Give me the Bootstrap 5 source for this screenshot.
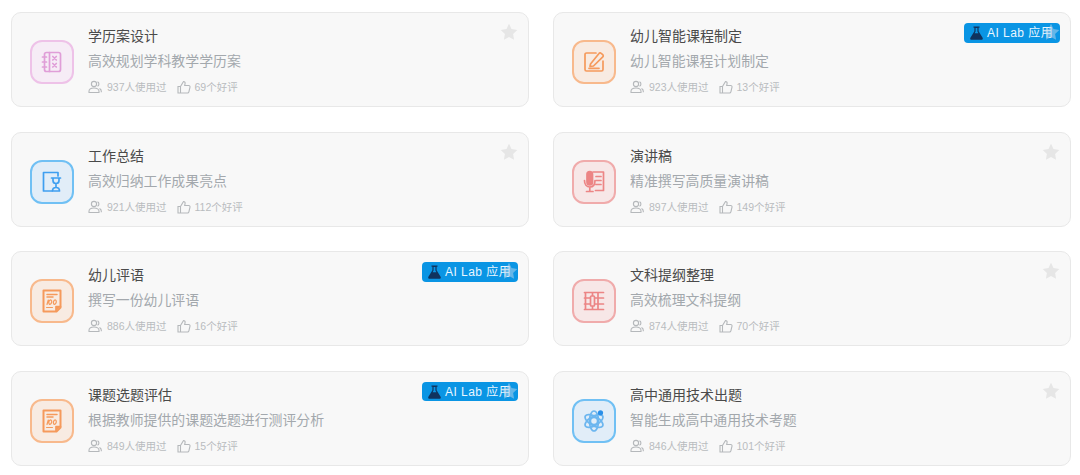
<!DOCTYPE html>
<html lang="zh">
<head>
<meta charset="utf-8">
<title>AI 应用</title>
<link href="https://cdn.jsdelivr.net/npm/bootstrap@5.3.0/dist/css/bootstrap.min.css" rel="stylesheet">
<style>
html,body{height:100%;overflow:hidden;background:#fff}
body{font-family:"Liberation Sans","Noto Sans CJK SC",sans-serif}
.app-grid{display:grid;grid-template-columns:518px 518px;column-gap:24px;row-gap:24.6px;padding:12px 9px 0 11px}
.app-card{height:95px;background:#f8f8f8;border:1px solid #e8e8e8;border-radius:10px;padding:0 18px;position:relative}
.app-ico{width:44px;height:44px;border-radius:12px;border:2px solid;flex:none;margin:5px 14px 0 0}
.app-ico svg{width:24px;height:24px;fill:none;stroke:currentColor;stroke-width:1.700;stroke-linecap:round;stroke-linejoin:round}
.tone-pink{color:#e09ed8;background:#f6ecf6;border-color:#eec2e8}
.tone-orange{color:#f59a5c;background:#f8ebe2;border-color:#f8b98c}
.tone-blue{color:#3f9ff0;background:#e1edf8;border-color:#70c0f4}
.tone-red{color:#ec8585;background:#f7e7e7;border-color:#f0abab}
.tone-blue .atom-ico{color:#6cb6ef}
.app-text{align-self:flex-start}
.app-title{font-size:14px;line-height:20px;color:#4a4a4a;margin-top:13px}
.app-desc{font-size:13.9px;line-height:20px;color:#a3a8ad;margin-top:5px}
.app-meta{font-size:10.5px;line-height:16px;color:#b9bcbf;margin-top:8px}
.app-meta svg{width:14px;height:14px;fill:none;stroke:#b5b8bb;stroke-width:1.1;margin-right:5px;flex:none}
.app-meta .meta-gap{margin-left:10px;margin-right:4px}
.app-star{position:absolute;top:10px;right:10px;width:18px;height:18px;fill:#e6e6e6}
.lab-tag{position:absolute;top:10px;right:10.500px;width:95.500px;height:19.500px;background:#0a95e4;border-radius:4px;color:#e9f6ff;font-size:12px;letter-spacing:.45px;padding-left:6px;gap:4px;white-space:nowrap}
.lab-tag span{padding-top:1px}
.lab-tag svg{width:13px;height:14px;flex:none}
.star-over{z-index:2;fill:rgba(190,215,235,.5)}
</style>
</head>
<body>
<svg width="0" height="0" class="position-absolute">
<defs>
<symbol id="s-user" viewBox="0 0 14 14"><circle cx="6" cy="4" r="2.600"/><path d="M1 12.500v-1.200c0-2 2-3.300 5-3.300s5 1.300 5 3.300v1.200z"/><path d="M9.500 1.800a2.500 2.500 0 0 1 0 4.500M11.500 8.500c1 .5 1.800 1.400 1.800 2.800v1"/></symbol>
<symbol id="s-up" viewBox="0 0 14 14"><path d="M1 6.500h2.500v6.500H1zM3.500 6.500 6.500 1.500c1.200 0 1.800.8 1.600 1.900L7.700 5.500h4c.9 0 1.500.8 1.300 1.600l-1.100 4.700c-.2.700-.7 1.200-1.400 1.200H3.500"/></symbol>
<symbol id="s-star" viewBox="0 0 18 18"><path d="M9 .8l2.500 5.300 5.800.8-4.200 4 1 5.800L9 14.100l-5.100 2.600 1-5.800-4.200-4 5.800-.8z"/></symbol>
<symbol id="s-flask" viewBox="0 0 13 14"><path fill="#10335f" d="M3.500 .5h6v1.300H8.600v3.400l4 6.600c.5.900 0 2-1.100 2H1.500C.4 13.800-.1 12.700.4 11.800l4-6.600V1.800h-.9z"/><path fill="#0a95e4" d="M5.600 2h1.800v3.600l1 1.700H4.600l1-1.700z"/></symbol>
<symbol id="s-report" viewBox="0 0 24 24"><path d="M3.500 1.500h17v17l-4 4h-13z" stroke-width="2"/><path d="M16 22v-4.500h4.500" fill="currentColor"/><path d="M7 5.500h10M7 8h6" stroke-width="1.500"/><path d="M7 15.500l1.300-4.500M11.200 11.200a1.400 2.200 15 1 0 .1 .1M15.800 11.200a1.400 2.200 15 1 0 .1 .1" stroke-width="1.200"/><path d="M6.500 18.500h6" stroke-width="1"/></symbol>
</defs>
</svg>
<main class="app-grid">

<article class="app-card d-flex align-items-center">
<div class="app-ico tone-pink d-flex align-items-center justify-content-center"><svg viewBox="0 0 24 24"><rect x="4.500" y="2.500" width="16" height="19" rx="2"/><path d="M9.500 2.500v19M2.500 7h4M2.500 12h4M2.500 17h4M12.800 6.500l3.500 3.500M16.300 6.500 12.800 10M12.800 13.500l3.500 3.500M16.300 13.500 12.800 17"/></svg></div>
<div class="flex-grow-1 app-text"><div class="app-title">学历案设计</div><div class="app-desc">高效规划学科教学学历案</div>
<div class="app-meta d-flex align-items-center"><svg><use href="#s-user"/></svg><span>937人使用过</span><svg class="meta-gap"><use href="#s-up"/></svg><span>69个好评</span></div></div>
<svg class="app-star"><use href="#s-star"/></svg>
</article>

<article class="app-card d-flex align-items-center">
<div class="app-ico tone-orange d-flex align-items-center justify-content-center"><svg viewBox="0 0 24 24"><path d="M14 3H4.500A1.500 1.500 0 0 0 3 4.500v15A1.500 1.500 0 0 0 4.500 21h15a1.500 1.500 0 0 0 1.500-1.500V11"/><path d="M8.500 14l8.500-10.500a1.500 1.500 0 0 1 2.200-.2l1.500 1.300a1.500 1.500 0 0 1 .1 2.200L11.500 16l-3.500.5z"/><path d="M7 18.300h10"/></svg></div>
<div class="flex-grow-1 app-text"><div class="app-title">幼儿智能课程制定</div><div class="app-desc">幼儿智能课程计划制定</div>
<div class="app-meta d-flex align-items-center"><svg><use href="#s-user"/></svg><span>923人使用过</span><svg class="meta-gap"><use href="#s-up"/></svg><span>13个好评</span></div></div>
<div class="lab-tag d-flex align-items-center"><svg><use href="#s-flask"/></svg><span>AI Lab 应用</span></div>
<svg class="app-star star-over"><use href="#s-star"/></svg>
</article>

<article class="app-card d-flex align-items-center">
<div class="app-ico tone-blue d-flex align-items-center justify-content-center"><svg viewBox="0 0 24 24" stroke-width="1.800"><path d="M18 6V2.500H3.500v18.500H12"/><path d="M11.500 8h9M13 8v2.500a3 3 0 0 0 6 0V8M16 13.500v4M12.500 21c0-2 1.500-3.500 3.500-3.500s3.500 1.500 3.500 3.500z"/></svg></div>
<div class="flex-grow-1 app-text"><div class="app-title">工作总结</div><div class="app-desc">高效归纳工作成果亮点</div>
<div class="app-meta d-flex align-items-center"><svg><use href="#s-user"/></svg><span>921人使用过</span><svg class="meta-gap"><use href="#s-up"/></svg><span>112个好评</span></div></div>
<svg class="app-star"><use href="#s-star"/></svg>
</article>

<article class="app-card d-flex align-items-center">
<div class="app-ico tone-red d-flex align-items-center justify-content-center"><svg viewBox="0 0 24 24"><rect x="5" y="1.500" width="5.500" height="13.500" rx="2.750" fill="currentColor"/><path d="M2.500 10.500c0 4 2.200 6.500 5.300 6.500s5.200-2.500 5.200-6.500M7.800 17v4.500M4.500 21.500h6.500M11 2h10.500v18.500h-8M14 6.500h5M14 10.500h5M14 14.500h5"/></svg></div>
<div class="flex-grow-1 app-text"><div class="app-title">演讲稿</div><div class="app-desc">精准撰写高质量演讲稿</div>
<div class="app-meta d-flex align-items-center"><svg><use href="#s-user"/></svg><span>897人使用过</span><svg class="meta-gap"><use href="#s-up"/></svg><span>149个好评</span></div></div>
<svg class="app-star"><use href="#s-star"/></svg>
</article>

<article class="app-card d-flex align-items-center">
<div class="app-ico tone-orange d-flex align-items-center justify-content-center"><svg><use href="#s-report"/></svg></div>
<div class="flex-grow-1 app-text"><div class="app-title">幼儿评语</div><div class="app-desc">撰写一份幼儿评语</div>
<div class="app-meta d-flex align-items-center"><svg><use href="#s-user"/></svg><span>886人使用过</span><svg class="meta-gap"><use href="#s-up"/></svg><span>16个好评</span></div></div>
<div class="lab-tag d-flex align-items-center"><svg><use href="#s-flask"/></svg><span>AI Lab 应用</span></div>
<svg class="app-star star-over"><use href="#s-star"/></svg>
</article>

<article class="app-card d-flex align-items-center">
<div class="app-ico tone-red d-flex align-items-center justify-content-center"><svg viewBox="0 0 24 24"><path d="M2.500 3.500h19M2.500 9h19M2.500 15h19M2.500 20.500h19M3.500 3.500v17M16 3.500v17M10.500 3.500v3.500M10.500 17v3.500"/><rect x="8.500" y="7" width="4" height="10" rx="1" fill="#f7e7e7"/></svg></div>
<div class="flex-grow-1 app-text"><div class="app-title">文科提纲整理</div><div class="app-desc">高效梳理文科提纲</div>
<div class="app-meta d-flex align-items-center"><svg><use href="#s-user"/></svg><span>874人使用过</span><svg class="meta-gap"><use href="#s-up"/></svg><span>70个好评</span></div></div>
<svg class="app-star"><use href="#s-star"/></svg>
</article>

<article class="app-card d-flex align-items-center">
<div class="app-ico tone-orange d-flex align-items-center justify-content-center"><svg><use href="#s-report"/></svg></div>
<div class="flex-grow-1 app-text"><div class="app-title">课题选题评估</div><div class="app-desc">根据教师提供的课题选题进行测评分析</div>
<div class="app-meta d-flex align-items-center"><svg><use href="#s-user"/></svg><span>849人使用过</span><svg class="meta-gap"><use href="#s-up"/></svg><span>15个好评</span></div></div>
<div class="lab-tag d-flex align-items-center"><svg><use href="#s-flask"/></svg><span>AI Lab 应用</span></div>
<svg class="app-star star-over"><use href="#s-star"/></svg>
</article>

<article class="app-card d-flex align-items-center">
<div class="app-ico tone-blue d-flex align-items-center justify-content-center"><svg class="atom-ico" viewBox="0 0 24 24" stroke-width="1.200"><circle cx="12" cy="12" r="3.600"/><ellipse cx="12" cy="12" rx="10" ry="4.500" transform="rotate(30 12 12)"/><ellipse cx="12" cy="12" rx="10" ry="4.500" transform="rotate(-30 12 12)"/><ellipse cx="12" cy="12" rx="10" ry="4.500" transform="rotate(90 12 12)"/><circle cx="18.500" cy="3.800" r="2.600" fill="#2a8fe8" stroke="none"/></svg></div>
<div class="flex-grow-1 app-text"><div class="app-title">高中通用技术出题</div><div class="app-desc">智能生成高中通用技术考题</div>
<div class="app-meta d-flex align-items-center"><svg><use href="#s-user"/></svg><span>846人使用过</span><svg class="meta-gap"><use href="#s-up"/></svg><span>101个好评</span></div></div>
<svg class="app-star"><use href="#s-star"/></svg>
</article>

</main>
</body>
</html>
